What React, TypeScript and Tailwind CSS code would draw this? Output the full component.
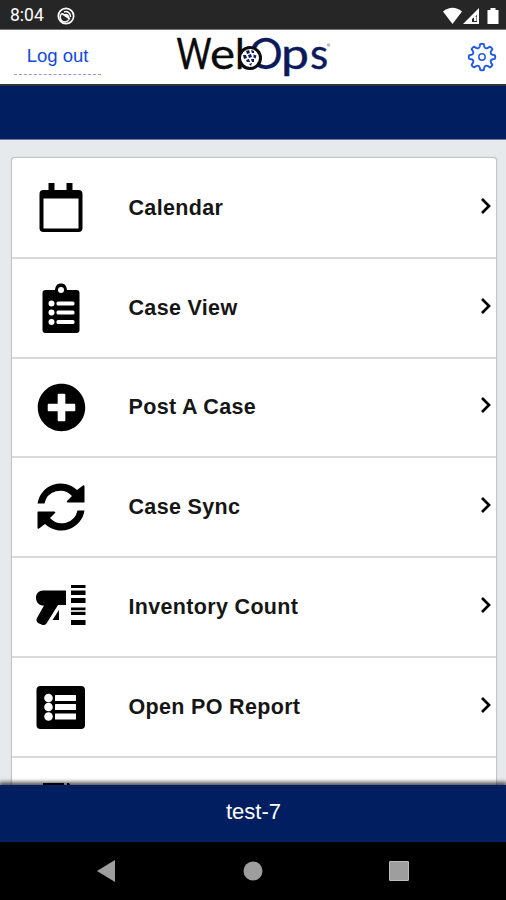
import React from 'react';
import { FaPlusCircle } from 'react-icons/fa';

interface MenuItem {
  label: string;
  icon: React.ReactNode;
}

const CalendarIcon = () => (
  <svg viewBox="0.5 0 50 50" className="h-[50px] w-[50px]">
    <path fillRule="evenodd" d="M13 0h6v7h12V0h6v7h6q4 0 4 4v34q0 4-4 4H8q-4 0-4-4V11q0-4 4-4h5zM8 15.500v30h35v-30z" />
  </svg>
);

const ClipboardIcon = () => (
  <svg viewBox="0.5 0 50 50" className="h-[50px] w-[50px]">
    <path d="M10 7h9.500C20 2.500 22 .5 25.500 .5S31 2.500 31.500 7H41q3 0 3 3v37q0 3-3 3H10q-3 0-3-3V10q0-3 3-3z" />
    <circle cx="25.500" cy="7" r="3" fill="white" />
    {[20.5, 29.5, 39].map(y => (
      <g key={y} fill="white">
        <circle cx="16" cy={y} r="3" />
        <rect x="21" y={y - 2} width="18" height="4" rx="1.500" />
      </g>
    ))}
  </svg>
);

const syncArrow = 'M.5 20.500A23.500 23.500 0 0 1 40 7l6-4.500q1.500-1 1.500 1V19q0 .5-.5 .5H31q-2 0-1-1.500l5-5A16 16 0 0 0 7.500 20.500z';

const SyncIcon = () => (
  <svg viewBox="0 0 48 48" className="h-12 w-12">
    <path d={syncArrow} />
    <path d={syncArrow} transform="rotate(180 24 24)" />
  </svg>
);

const ScannerIcon = () => (
  <svg viewBox="0 0 50 50" className="h-[50px] w-[50px]">
    <path d="M7 8.500h23v14.500h-8L10.500 41.500q-2 2.500-5 1L2 41q-2.500-2-1-5l7-12.500H6C2 22.500 0 19.500 0 15.500s3-7 7-7z" />
    <path d="M23 28v10h-6.500z" />
    <path d="M35 3h14.500v3H35zM35 8.500h14.500V13H35zM35 16h14.500v5H35zM35 25.500h14.500V28H35zM35 30h14.500v3H35zM35 38h14.500v5H35z" />
    <path d="M35 29h14.500" stroke="#999" strokeWidth="1" />
  </svg>
);

const ReportIcon = () => (
  <svg viewBox="0.5 0 50 50" className="h-[50px] w-[50px]">
    <rect x="1" y="4" width="48.500" height="43" rx="4" />
    {[16, 25, 34.5].map(y => (
      <g key={y} fill="white">
        <circle cx="13" cy={y} r="4.300" />
        <rect x="19.500" y={y - 3} width="21" height="6" rx=".5" />
      </g>
    ))}
  </svg>
);

const menuItems: MenuItem[] = [
  { label: 'Calendar', icon: <CalendarIcon /> },
  { label: 'Case View', icon: <ClipboardIcon /> },
  { label: 'Post A Case', icon: <FaPlusCircle className="h-[49px] w-[49px]" /> },
  { label: 'Case Sync', icon: <SyncIcon /> },
  { label: 'Inventory Count', icon: <ScannerIcon /> },
  { label: 'Open PO Report', icon: <ReportIcon /> },
];

const Logo = () => (
  <svg viewBox="0 0 160 50" className="h-[50px] w-[160px] overflow-visible" aria-label="WebOps">
    <text y="37" fontFamily="Lato, sans-serif" fontSize="42" fill="#0b0b0b" stroke="#0b0b0b" strokeWidth=".4">
      <tspan x="0.500" textLength="35" lengthAdjust="spacingAndGlyphs">W</tspan>
      <tspan x="34" textLength="25" lengthAdjust="spacingAndGlyphs">e</tspan>
      <tspan x="59">b</tspan>
      <tspan x="73" fill="#0c1a5c" stroke="#0c1a5c">O</tspan>
      <tspan x="105" textLength="28" lengthAdjust="spacingAndGlyphs" fill="#0c1a5c" stroke="#0c1a5c">p</tspan>
      <tspan x="134" fill="#0c1a5c" stroke="#0c1a5c">s</tspan>
    </text>
    <circle cx="74" cy="26" r="10.500" fill="white" stroke="#0b0b0b" strokeWidth="3" />
    <g fill="#0c1a5c">
      <path d="M70 19l3-1 1 3-3 1zM75 18l3 1 0 2-2 0zM67 23l3 0 1 3-3 1zM72 23l3-1 1 3-3 1zM77.500 22.500l3 1-1 3-2-1zM70 28l3-1 1 3-3 0zM75 27l3 0 0 3-2 0zM73 32l3-1-1 3z" />
    </g>
    <circle cx="152.500" cy="13" r="1.800" fill="#bbb" />
  </svg>
);

const teeth = [0, 45, 90, 135, 180, 225, 270, 315];

// outline of the cog: flat tooth tips joined by rounded valleys
const cogPath = teeth
  .map((deg, i) => {
    const at = (r: number, offset: number) => {
      const a = ((deg + offset) * Math.PI) / 180;
      return `${(15 + r * Math.cos(a)).toFixed(2)} ${(15 + r * Math.sin(a)).toFixed(2)}`;
    };
    return `${i ? 'L' : 'M'}${at(13, -8)}Q${at(13.7, 0)} ${at(13, 8)}L${at(10.8, 12)}Q${at(8.4, 22.5)} ${at(10.8, 33)}`;
  })
  .join('') + 'Z';

const GearIcon = () => (
  <svg viewBox="0 0 30 30" className="h-[30px] w-[30px]" fill="none" stroke="#1f5bea" strokeWidth="1.900" strokeLinejoin="round">
    <path d={cogPath} />
    <circle cx="15" cy="15" r="3.200" strokeWidth="1.500" />
  </svg>
);

const StatusBar = () => (
  <div className="flex h-[30px] shrink-0 items-center justify-between border-b border-[#777] bg-[#262626] pl-2.5 pr-[7px] pt-[3px] text-white">
    <div className="flex items-center gap-[13px]">
      <span className="font-[Roboto,sans-serif] text-[17.5px] leading-none">8:04</span>
      <svg viewBox="0 0 18 18" className="h-[18px] w-[18px]" fill="none" stroke="white">
        <circle cx="9" cy="9" r="7.700" strokeWidth="1.700" />
        <path d="M5 6.500A4.700 4.700 0 1 0 12 12.500M7 5A4.700 4.700 0 0 1 13.500 10" strokeWidth="1.500" />
        <path d="M5 6.500l8 5.500M7.500 8q3-1.500 4 2" strokeWidth="1.700" />
      </svg>
    </div>
    <svg viewBox="0 0 58 18" className="h-[18px] w-[58px]" fill="white">
      <path d="M2 4.500Q11.500-3 21 4.500L11.500 17z" />
      <path fillRule="evenodd" d="M22 17L38 1v16zM31 15h5V8L31 12z" />
      <path d="M33 9.500h2.500V14H33z" />
      <path d="M46.500 3h3V1h5v2h3v14h-11z" />
    </svg>
  </div>
);

export default function App() {
  return (
    <div className="flex h-[900px] w-[506px] flex-col overflow-hidden bg-[#e7eaed] font-['Liberation_Sans',sans-serif]">
      <StatusBar />

      <header className="flex h-14 shrink-0 items-start border-b-2 border-[#33343a] bg-white pl-3.5 pr-[9px]">
        <div className="h-[45px] w-[87px] border-b border-dashed border-[#9a94e8] pt-[13px] text-center text-[18.5px] leading-[26px] text-[#0f4be0]">
          Log out
        </div>
        <div className="ml-[75px] pt-0.5">
          <Logo />
        </div>
        <div className="ml-auto pt-3">
          <GearIcon />
        </div>
      </header>
      <div className="h-[54px] shrink-0 border-b border-[#77769c] bg-[#001e60]" />

      <main className="min-h-0 flex-1 overflow-hidden pl-[11px] pr-[9px] pt-[17px]">
        <ul className="h-[700px] overflow-hidden rounded-t border-x border-t border-[#c3c5c7] bg-white pt-px shadow-[0_0_1px_#aaa]">
          {menuItems.map(item => (
            <li key={item.label} className="flex h-[99.8px] items-center border-b-2 border-[#d9d9d9] pl-6 pr-1">
              <div className="flex w-[50px] justify-center text-black">{item.icon}</div>
              <span className="ml-[42.5px] flex-1 text-[21.5px] font-bold tracking-[0.33px] text-[#161616]">{item.label}</span>
              <svg viewBox="0 0 12 18" className="mb-1 h-[18px] w-3" fill="none" stroke="black" strokeWidth="2.700">
                <path d="M2 2l7 7-7 7" />
              </svg>
            </li>
          ))}
          <li className="pl-[31px] pt-[25px]">
            <svg viewBox="0 0 30 4" className="h-1 w-[30px]">
              <path d="M0 0h21v4H0zM24 0h2l2 4h-4z" />
            </svg>
          </li>
        </ul>
      </main>

      <footer className="relative flex h-[57px] shrink-0 items-center justify-center bg-[#001e60] pb-1 text-[22px] text-white shadow-[0_-2px_4px_1px_rgba(0,0,0,0.65)]">
        <span className="pl-px">test-7</span>
      </footer>
      <nav className="flex h-[58px] shrink-0 items-center justify-between bg-black pl-[97px] pr-[97px]">
        <svg viewBox="0 0 20 22" className="h-[22px] w-5" fill="#9e9e9e">
          <path d="M0 11L18 0v22z" />
        </svg>
        <svg viewBox="0 0 20 20" className="h-5 w-5" fill="#9e9e9e">
          <circle cx="10" cy="10" r="9.500" />
        </svg>
        <div className="h-5 w-5 rounded-[1px] border border-[#bdbdbd] bg-[#9e9e9e]" />
      </nav>
    </div>
  );
}
